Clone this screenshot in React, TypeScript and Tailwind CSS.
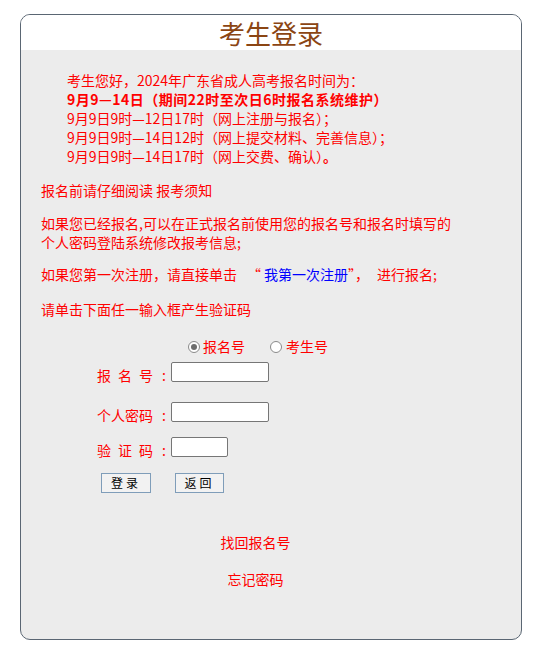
import React from "react";

const font = { fontFamily: '"Noto Sans CJK SC", "Liberation Sans", sans-serif' };

function Radio({ checked }: { checked?: boolean }) {
  return (
    <span className="flex h-[12px] w-[12px] items-center justify-center rounded-full border border-[#8a8a8a] bg-white">
      {checked && <span className="h-[6px] w-[6px] rounded-full bg-[#6e6e6e]" />}
    </span>
  );
}

function FieldRow({ chars, inputWidth, className }: { chars: string[]; inputWidth: string; className: string }) {
  return (
    <div className={`flex h-[20px] items-center pl-[76px] ${className}`}>
      <div className="flex w-[56px] translate-y-[3px] justify-between text-[14px] leading-[19px] text-[#ff0000]">
        {chars.map((c, i) => (
          <span key={i}>{c}</span>
        ))}
      </div>
      <span className="ml-[9px] w-[9px] translate-y-[3px] text-[14px] leading-[19px] text-[#ff0000]">:</span>
      <input className={`h-[20px] ${inputWidth} rounded-[2px] border border-[#767676] bg-white px-1 text-[13px] outline-none`} />
    </div>
  );
}

export default function App() {
  return (
    <div className="min-h-[660px] bg-white pl-[20px] pt-[14px]" style={font}>
      <div className="h-[626px] w-[502px] overflow-hidden rounded-[10px] border border-[#5a6673] bg-[#ececec]">
        <div className="h-[35px] bg-white text-center text-[26px] leading-[35px] text-[#8b4513]">考生登录</div>

        <div className="pt-[21px]">
          <div className="pl-[46px] text-[14px] leading-[19px] text-[#ff0000]">
            <p>考生您好，2024年广东省成人高考报名时间为：</p>
            <p className="font-bold tracking-[0.5px]">9月9—14日（期间22时至次日6时报名系统维护）</p>
            <p>9月9日9时—12日17时（网上注册与报名）；</p>
            <p>9月9日9时—14日12时（网上提交材料、完善信息）；</p>
            <p>
              9月9日9时—14日17时（网上交费、确认）<span className="font-bold">。</span>
            </p>
          </div>

          <div className="pl-[20px] text-[14px] leading-[19px] text-[#ff0000]">
            <p className="mt-[15px]">报名前请仔细阅读 报考须知</p>
            <p className="mt-[14px]">
              如果您已经报名,可以在正式报名前使用您的报名号和报名时填写的
              <br />
              个人密码登陆系统修改报考信息;
            </p>
            <p className="mt-[13px]">
              如果您第一次注册，请直接单击<span className="ml-[10px] mr-[3px]">“</span>
              <span className="text-[#0000ff]">我第一次注册</span>”，<span className="ml-[8px]">进行报名;</span>
            </p>
            <p className="mt-[16px]">请单击下面任一输入框产生验证码</p>
          </div>

          <div className="mt-[18px] flex items-center pl-[167px] text-[14px] leading-[19px] text-[#ff0000]">
            <Radio checked />
            <span className="ml-[3px]">报名号</span>
            <span className="ml-[25px]">
              <Radio />
            </span>
            <span className="ml-[4px]">考生号</span>
          </div>

          <FieldRow chars={["报", "名", "号"]} inputWidth="w-[98px]" className="mt-[6px]" />
          <FieldRow chars={["个", "人", "密", "码"]} inputWidth="w-[98px]" className="mt-[20px]" />
          <FieldRow chars={["验", "证", "码"]} inputWidth="w-[57px]" className="mt-[15px]" />

          <div className="mt-[16px] flex pl-[80px]">
            <button className="h-[20px] w-[50px] border border-[#7f9db9] bg-[#f2f2f2] text-[12px] leading-[18px] tracking-[3px] text-black">
              登录
            </button>
            <button className="ml-[24px] h-[20px] w-[49px] border border-[#7f9db9] bg-[#f2f2f2] text-[12px] leading-[18px] tracking-[3px] text-black">
              返回
            </button>
          </div>

          <div className="w-[469px] text-center text-[14px] leading-[19px] text-[#ff0000]">
            <p className="mt-[40px]">找回报名号</p>
            <p className="mt-[18px]">忘记密码</p>
          </div>
        </div>
      </div>
    </div>
  );
}
